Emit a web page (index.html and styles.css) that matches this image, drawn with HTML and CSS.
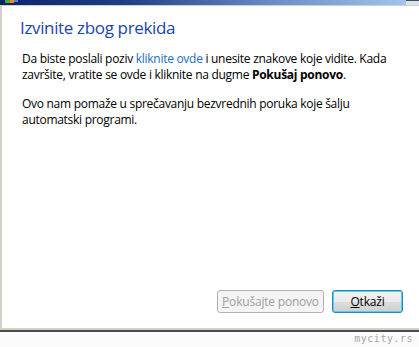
FILE: index.html
```html
<!DOCTYPE html>
<html lang="sr-Latn">
<head>
    <meta charset="UTF-8">
    <meta name="viewport" content="width=device-width, initial-scale=1.0">
    <title>Izvinite zbog prekida</title>
    <link rel="stylesheet" href="styles.css">
</head>
<body>

<div class="window">
    <div class="titlebar">
        <span class="app-icon">
            <i class="green"></i><i class="orange"></i><i class="blue"></i>
        </span>
        <span class="close-btn"></span>
    </div>

    <div class="client">
        <h1 class="instruction">Izvinite zbog prekida</h1>

        <p>Da biste poslali poziv <a href="#">kliknite ovde</a> i unesite znakove koje vidite. Kada<br>
        završite, vratite se ovde i kliknite na dugme <b>Pokušaj ponovo</b>.</p>

        <p>Ovo nam pomaže u sprečavanju bezvrednih poruka koje šalju<br>
        automatski programi.</p>

        <div class="buttons">
            <button class="btn" disabled><u>P</u>okušajte ponovo</button>
            <button class="btn default"><u>O</u>tkaži</button>
        </div>
    </div>

    <div class="footer">mycity.rs</div>
</div>

</body>
</html>
```

FILE: styles.css
```css
body {
    margin: 0;
    font-family: 'Open Sans', 'Noto Sans', sans-serif;
    background: #ffffff;
}

.window {
    width: 419px;
    height: 347px;
    display: flex;
    flex-direction: column;
    overflow: hidden;
}

.titlebar {
    height: 5px;
    display: flex;
    justify-content: space-between;
    align-items: flex-start;
    background: linear-gradient(90deg, #0a246a 0%, #1f3f86 30%, #6a8cc8 65%, #a6caf0 100%);
}

.app-icon {
    display: flex;
    margin-left: 5px;
    height: 3px;
}

.app-icon i {
    display: block;
    height: 3px;
}

.app-icon .green { width: 5px; background: #54a53c; }
.app-icon .orange { width: 4px; background: #f08a24; }
.app-icon .blue { width: 4px; background: #3b8fd8; height: 2px; }

.close-btn {
    width: 13px;
    height: 4px;
    background: #d8e4f0;
    border-top: 1px solid #4a4a4a;
}

.client {
    flex: 1;
    display: flex;
    flex-direction: column;
    background: #ffffff;
    border-top: 1px solid #d4d0c8;
    border-left: 2px solid #d4d0c8;
    border-bottom: 2px solid #d4d0c8;
    padding: 0 16px 15px 18px;
}

.instruction {
    margin: 11px 0 0 0;
    font-size: 17px;
    font-weight: normal;
    line-height: 22px;
    letter-spacing: -0.35px;
    color: #1a45ad;
}

.client p {
    margin: 12px 0 0 2px;
    font-size: 12px;
    line-height: 16px;
    letter-spacing: -0.28px;
    white-space: nowrap;
    color: #000000;
}

.client p + p {
    margin-top: 13px;
}

.client a {
    color: #1a6fc4;
    text-decoration: none;
}

.buttons {
    margin-top: auto;
    display: flex;
    justify-content: flex-end;
    gap: 8px;
}

.btn {
    height: 23px;
    padding: 0;
    font-family: 'Open Sans', 'Noto Sans', sans-serif;
    font-size: 12px;
    letter-spacing: -0.2px;
    white-space: nowrap;
    border-radius: 3px;
    border: 1px solid #707070;
    background: linear-gradient(180deg, #f2f2f2 0%, #ebebeb 50%, #dddddd 51%, #cfcfcf 100%);
    color: #000000;
}

.btn[disabled] {
    width: 107px;
    border-color: #adb2b5;
    background: #f4f4f4;
    color: #a0a0a0;
}

.btn.default {
    width: 71px;
    border-color: #3c7fb1;
    box-shadow: inset 0 0 0 1px #48d4f8;
}

.footer {
    height: 15px;
    border-top: 2px solid #4a4a4a;
    background: #fbfbfb;
    font-family: 'DejaVu Sans Mono', monospace;
    font-size: 10px;
    line-height: 13px;
    color: #a8a8a8;
    text-align: right;
    padding-right: 6px;
    letter-spacing: 0.5px;
}
```
